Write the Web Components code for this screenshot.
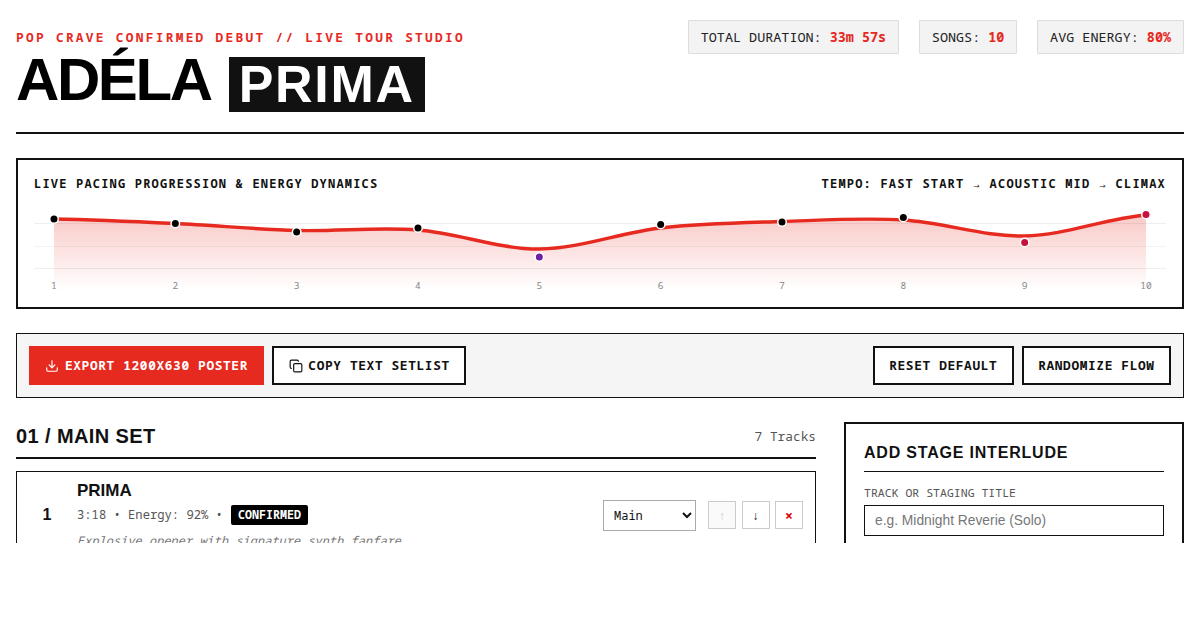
<!DOCTYPE html>
<html lang="en">
<head>
<meta charset="utf-8">
<title>Adéla Prima setlist</title>
<style>
  html, body { margin: 0; background: #fff; }
  body { font-family: "Liberation Sans", Arial, sans-serif; color: #111; }
</style>
</head>
<body>
<setlist-app>
  <site-header>
    <stat-chip slot="stats" label="TOTAL DURATION:" value="33m 57s"></stat-chip>
    <stat-chip slot="stats" label="SONGS:" value="10"></stat-chip>
    <stat-chip slot="stats" label="AVG ENERGY:" value="80%"></stat-chip>
  </site-header>
  <pacing-chart></pacing-chart>
  <tool-bar>
    <action-button slot="left" kind="primary" icon="download">EXPORT 1200X630 POSTER</action-button>
    <action-button slot="left" icon="copy">COPY TEXT SETLIST</action-button>
    <action-button slot="right">RESET DEFAULT</action-button>
    <action-button slot="right">RANDOMIZE FLOW</action-button>
  </tool-bar>
  <set-layout>
    <set-section title="01 / MAIN SET" count="7 Tracks">
      <track-row num="1" name="PRIMA" meta="3:18 • Energy: 92% •" badge="CONFIRMED" note="Explosive opener with signature synth fanfare"></track-row>
    </set-section>
    <interlude-form slot="side"></interlude-form>
  </set-layout>
</setlist-app>

<script>
const MONO = '"Noto Sans Mono", "DejaVu Sans Mono", monospace';
const SANS = '"Liberation Sans", Arial, sans-serif';

class SetlistApp extends HTMLElement {
  constructor() {
    super();
    this.attachShadow({ mode: 'open' }).innerHTML = `
      <style>
        :host { display: block; height: 543px; overflow: hidden; box-sizing: border-box; padding: 20px 16px 0; }
      </style>
      <slot></slot>`;
  }
}

class SiteHeader extends HTMLElement {
  constructor() {
    super();
    this.attachShadow({ mode: 'open' }).innerHTML = `
      <style>
        :host { display: flex; justify-content: space-between; align-items: flex-start; height: 112px; border-bottom: 2px solid #111; margin-bottom: 24px; }
        .kicker { font: bold 12.8px/15px ${MONO}; letter-spacing: 2.3px; color: #e62a1f; margin-top: 10px; }
        h1 { margin: 5px 0 0; font: bold 60px/60px ${SANS}; letter-spacing: -2.4px; color: #000; white-space: nowrap; display: flex; align-items: flex-start; }
        .tag { background: #111; color: #fff; font-size: 52px; line-height: 55px; letter-spacing: 1.7px; padding: 0 10px; margin: 7px 0 0 18px; }
        .stats { display: flex; gap: 19.7px; }
      </style>
      <div>
        <div class="kicker">POP CRAVE CONFIRMED DEBUT // LIVE TOUR STUDIO</div>
        <h1>ADÉLA <span class="tag">PRIMA</span></h1>
      </div>
      <div class="stats"><slot name="stats"></slot></div>`;
  }
}

class StatChip extends HTMLElement {
  constructor() {
    super();
    this.attachShadow({ mode: 'open' });
  }
  connectedCallback() {
    this.shadowRoot.innerHTML = `
      <style>
        :host { display: block; background: #f3f3f3; border: 1px solid #ddd; border-radius: 1px; padding: 8px 12px; font: 13.44px/16px ${MONO}; color: #222; white-space: nowrap; }
        b { color: #e62a1f; }
      </style>
      ${this.getAttribute('label')} <b>${this.getAttribute('value')}</b>`;
  }
}

class PacingChart extends HTMLElement {
  constructor() {
    super();
    this.attachShadow({ mode: 'open' });
  }
  connectedCallback() {
    const W = 1132, H = 90;
    const step = (1146 - 54) / 9;
    const xs = Array.from({ length: 10 }, (_, i) => 20 + i * step);
    // y values are relative to the top of the svg (page y - 204)
    const line = [15, 19.5, 26.5, 26, 45, 24, 17.5, 16, 32, 11];
    const dots = [15, 19.5, 28, 24, 53, 20.5, 18, 13.5, 38.5, 10.5];
    const colors = ['#000', '#000', '#000', '#000', '#6b21a8', '#000', '#000', '#000', '#c8103f', '#c8103f'];

    let d = `M${xs[0]},${line[0]}`;
    for (let i = 0; i < 9; i++) {
      const p0 = line[Math.max(i - 1, 0)], p1 = line[i], p2 = line[i + 1], p3 = line[Math.min(i + 2, 9)];
      const c1 = p1 + (p2 - p0) / 6, c2 = p2 - (p3 - p1) / 6;
      d += ` C${(xs[i] + step / 3).toFixed(1)},${c1.toFixed(1)} ${(xs[i + 1] - step / 3).toFixed(1)},${c2.toFixed(1)} ${xs[i + 1].toFixed(1)},${p2}`;
    }
    const area = `${d} L${xs[9]},${H - 4} L${xs[0]},${H - 4} Z`;

    const grid = [[19, '#eee'], [42, '#f3f3f3'], [64, '#eee']].map(([y, c]) => `<line x1="0" x2="${W}" y1="${y + 0.5}" y2="${y + 0.5}" stroke="${c}" stroke-width="1"/>`).join('');
    const circles = xs.map((x, i) => `<circle cx="${x}" cy="${dots[i]}" r="4.25" fill="${colors[i]}" stroke="#fff" stroke-width="1.5"/>`).join('');
    const labels = xs.map((x, i) => `<text x="${x}" y="85" text-anchor="middle">${i + 1}</text>`).join('');

    this.shadowRoot.innerHTML = `
      <style>
        :host { display: block; border: 2px solid #111; padding: 16px 16px 14px; height: 151px; box-sizing: border-box; margin-bottom: 24px; }
        .head { display: flex; justify-content: space-between; font: bold 12px/15px ${MONO}; letter-spacing: 1.2px; color: #111; height: 15px; margin-bottom: 13px; }
        svg { display: block; }
        text { font: 9.6px ${MONO}; fill: #888; }
      </style>
      <div class="head">
        <span>LIVE PACING PROGRESSION &amp; ENERGY DYNAMICS</span>
        <span>TEMPO: FAST START → ACOUSTIC MID → CLIMAX</span>
      </div>
      <svg width="${W}" height="${H}" viewBox="0 0 ${W} ${H}">
        <defs>
          <linearGradient id="fill" x1="0" y1="0" x2="0" y2="1">
            <stop offset="0" stop-color="#e62a1f" stop-opacity="0.25"/>
            <stop offset="1" stop-color="#e62a1f" stop-opacity="0"/>
          </linearGradient>
        </defs>
        ${grid}
        <path d="${area}" fill="url(#fill)"/>
        <path d="${d}" fill="none" stroke="#e62a1f" stroke-width="3.4" stroke-linecap="round"/>
        ${circles}
        ${labels}
      </svg>`;
  }
}

class ToolBar extends HTMLElement {
  constructor() {
    super();
    this.attachShadow({ mode: 'open' }).innerHTML = `
      <style>
        :host { display: flex; justify-content: space-between; background: #f5f5f5; border: 1px solid #111; padding: 12px; margin-bottom: 24px; }
        div { display: flex; gap: 8px; }
      </style>
      <div><slot name="left"></slot></div>
      <div><slot name="right"></slot></div>`;
  }
}

const ICONS = {
  download: '<path d="M12 15V3"/><path d="M21 15v4a2 2 0 0 1-2 2H5a2 2 0 0 1-2-2v-4"/><path d="M7 10l5 5 5-5"/>',
  copy: '<rect x="8" y="8" width="14" height="14" rx="2"/><path d="M4 16c-1.1 0-2-.9-2-2V4c0-1.1.9-2 2-2h10c1.1 0 2 .9 2 2"/>',
};

class ActionButton extends HTMLElement {
  constructor() {
    super();
    this.attachShadow({ mode: 'open' });
  }
  connectedCallback() {
    const primary = this.getAttribute('kind') === 'primary';
    const icon = this.getAttribute('icon');
    this.shadowRoot.innerHTML = `
      <style>
        :host { display: flex; align-items: center; gap: 5.6px; box-sizing: border-box; height: 39px; padding: 0 14.4px; cursor: pointer;
          border: 2px solid ${primary ? '#e62a1f' : '#111'}; background: ${primary ? '#e62a1f' : '#fff'}; color: ${primary ? '#fff' : '#111'};
          font: bold 12.8px/15px ${MONO}; letter-spacing: 0.64px; white-space: nowrap; }
        svg { width: 14px; height: 14px; fill: none; stroke: currentColor; stroke-width: 2; stroke-linecap: round; stroke-linejoin: round; flex: none; }
      </style>
      ${icon ? `<svg viewBox="0 0 24 24">${ICONS[icon]}</svg>` : ''}<slot></slot>`;
  }
}

class SetLayout extends HTMLElement {
  constructor() {
    super();
    this.attachShadow({ mode: 'open' }).innerHTML = `
      <style>
        :host { display: grid; grid-template-columns: 800px 340px; gap: 28px; align-items: start; }
      </style>
      <slot></slot><slot name="side"></slot>`;
  }
}

class SetSection extends HTMLElement {
  constructor() {
    super();
    this.attachShadow({ mode: 'open' });
  }
  connectedCallback() {
    this.shadowRoot.innerHTML = `
      <style>
        :host { display: block; }
        header { display: flex; justify-content: space-between; align-items: flex-start; height: 35px; border-bottom: 2px solid #111; margin-bottom: 12px; }
        h2 { margin: 0; font: bold 20px/28px ${SANS}; letter-spacing: 0.4px; color: #111; }
        span { font: 12.8px/28px ${MONO}; color: #555; }
      </style>
      <header><h2>${this.getAttribute('title')}</h2><span>${this.getAttribute('count')}</span></header>
      <slot></slot>`;
  }
}

class TrackRow extends HTMLElement {
  constructor() {
    super();
    this.attachShadow({ mode: 'open' });
  }
  connectedCallback() {
    const attr = (n) => this.getAttribute(n);
    this.shadowRoot.innerHTML = `
      <style>
        :host { display: flex; align-items: center; border: 1px solid #111; padding: 9px 12px 10px 0; background: #fff; }
        .num { width: 60px; flex: none; text-align: center; font: bold 16px/20px ${SANS}; color: #111; }
        .body { flex: 1; min-width: 0; }
        .name { font: bold 17px/20px ${SANS}; color: #111; margin-bottom: 4px; }
        .meta { display: flex; align-items: center; gap: 8px; font: 12.16px/20px ${MONO}; color: #555; }
        .badge { background: #000; color: #fff; font: bold 11.68px/20px ${MONO}; padding: 0 7px; border-radius: 2px; }
        .note { font: italic 12px/16px ${MONO}; color: #777; margin-top: 8px; }
        select { width: 93px; height: 31px; box-sizing: border-box; font: 12px ${MONO}; color: #111; background: #fff; border: 1px solid #aaa; padding: 0 6px; margin-right: 12px; border-radius: 0; }
        .ctrl { display: flex; gap: 5.5px; }
        .ctrl span { width: 28px; height: 28px; box-sizing: border-box; border: 1px solid #ccc; display: flex; align-items: center; justify-content: center; font: 12px ${MONO}; color: #111; background: #fff; }
        .ctrl .off { color: #ccc; background: #fafafa; }
        .ctrl .del { color: #d00; font-weight: bold; font-size: 14px; }
      </style>
      <div class="num">${attr('num')}</div>
      <div class="body">
        <div class="name">${attr('name')}</div>
        <div class="meta"><span>${attr('meta')}</span><span class="badge">${attr('badge')}</span></div>
        <div class="note">${attr('note')}</div>
      </div>
      <select><option>Main</option><option>Encore</option></select>
      <div class="ctrl"><span class="off">↑</span><span>↓</span><span class="del">×</span></div>`;
  }
}

class InterludeForm extends HTMLElement {
  constructor() {
    super();
    this.attachShadow({ mode: 'open' }).innerHTML = `
      <style>
        :host { display: block; border: 2px solid #111; padding: 18px; background: #fff; }
        h3 { margin: 0 0 14px; padding-bottom: 17px; border-bottom: 1px solid #111; font: bold 16px/22px ${SANS}; letter-spacing: 0.8px; color: #111; height: 12px; }
        label { display: block; font: 11.52px/14px ${MONO}; color: #555; margin-bottom: 5px; }
        input { display: block; width: 100%; height: 31px; box-sizing: border-box; border: 1px solid #111; padding: 0 10px; font: 13.8px ${SANS}; }
        input::placeholder { color: #777; }
      </style>
      <h3>ADD STAGE INTERLUDE</h3>
      <label>TRACK OR STAGING TITLE</label>
      <input placeholder="e.g. Midnight Reverie (Solo)">`;
  }
}

customElements.define('setlist-app', SetlistApp);
customElements.define('site-header', SiteHeader);
customElements.define('stat-chip', StatChip);
customElements.define('pacing-chart', PacingChart);
customElements.define('tool-bar', ToolBar);
customElements.define('action-button', ActionButton);
customElements.define('set-layout', SetLayout);
customElements.define('set-section', SetSection);
customElements.define('track-row', TrackRow);
customElements.define('interlude-form', InterludeForm);
</script>
</body>
</html>
